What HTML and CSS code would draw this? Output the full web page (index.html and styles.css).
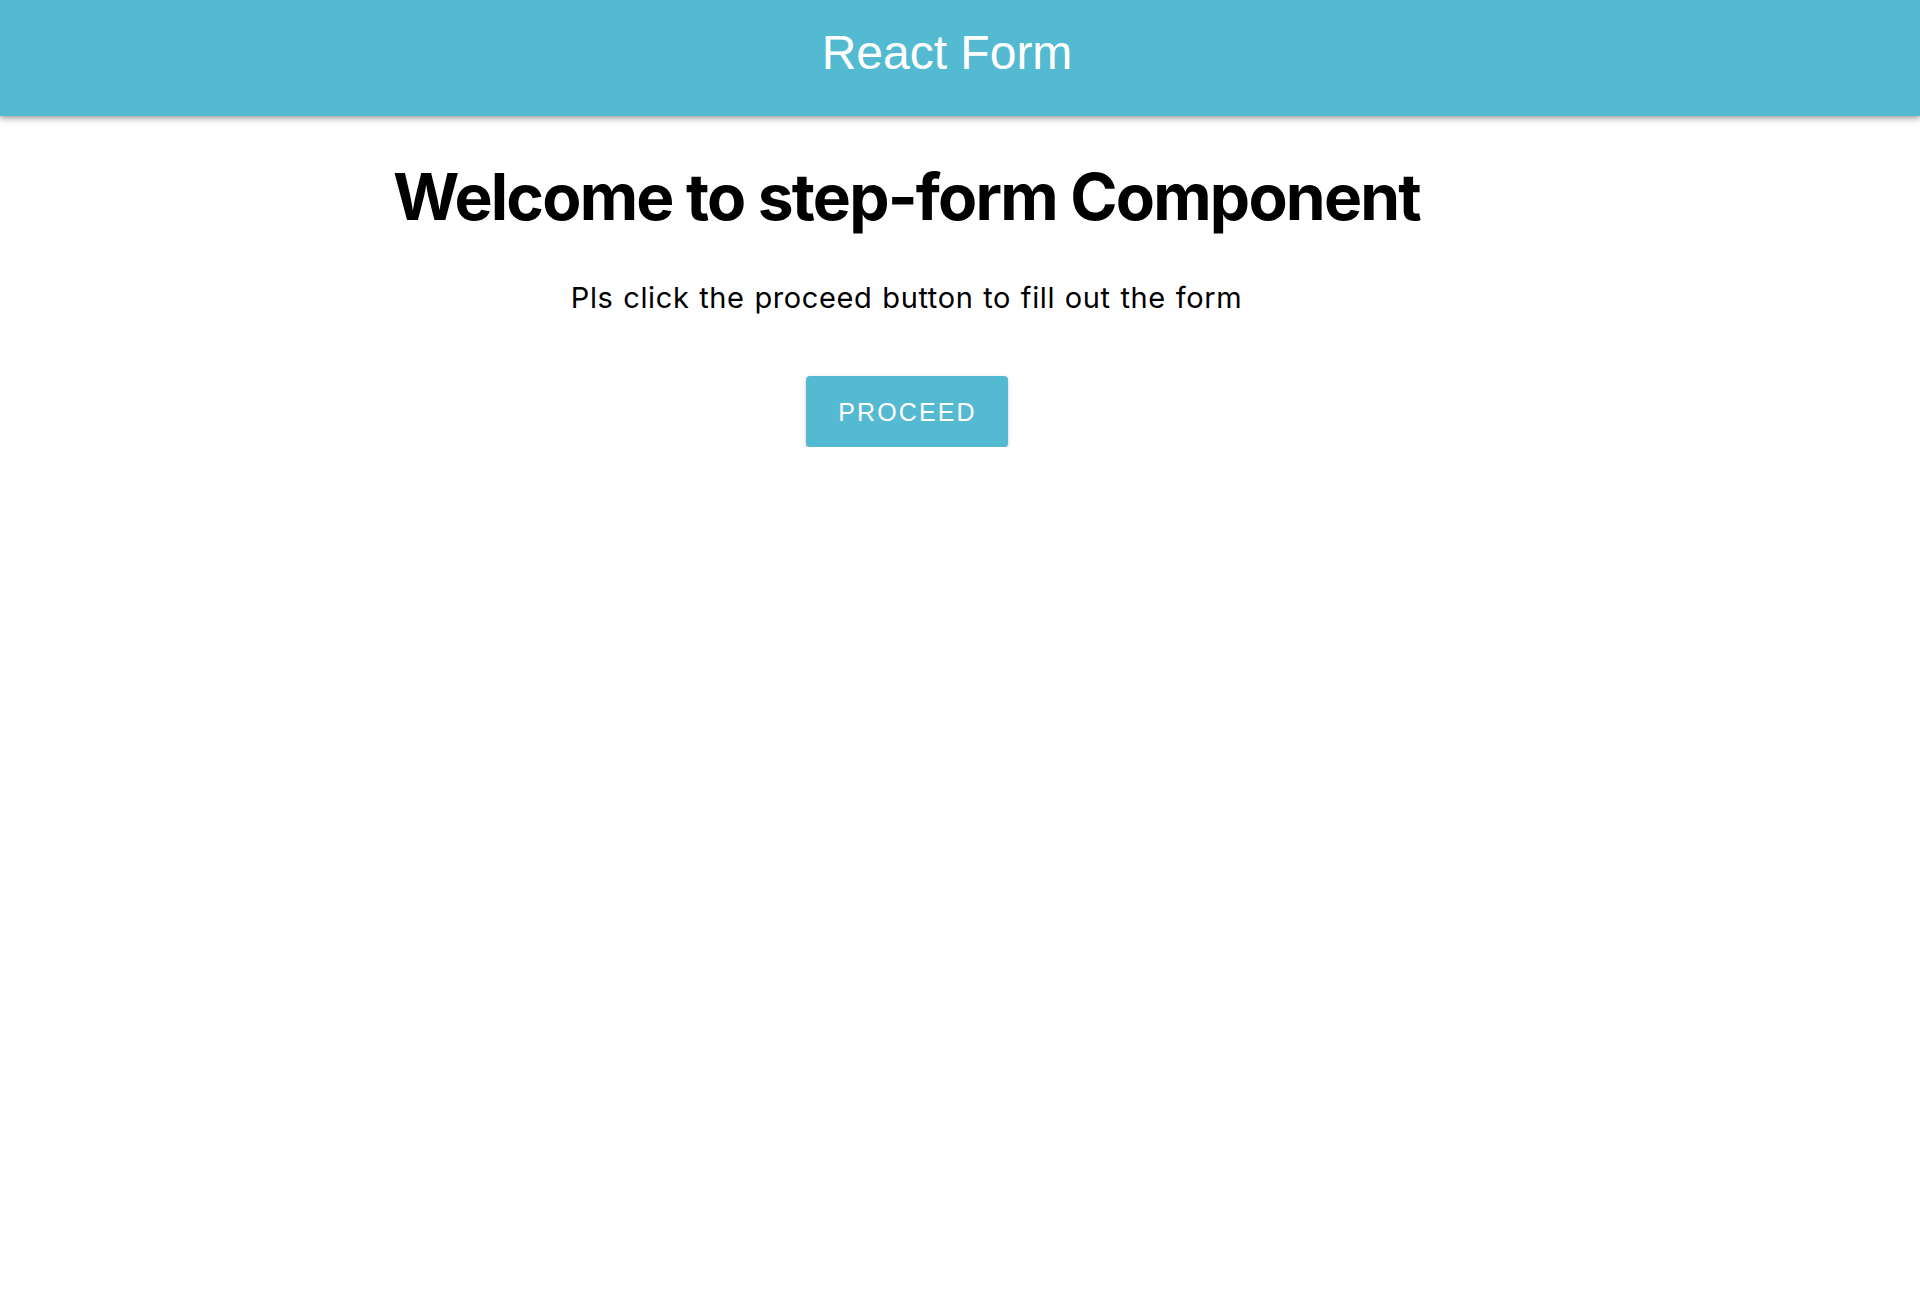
FILE: index.html
```html
<!DOCTYPE html>
<html lang="en">
<head>
<meta charset="utf-8">
<title>React Form</title>
<link rel="stylesheet" href="styles.css">
</head>
<body>
<header class="appbar">
  <div class="toolbar">
    <h2 class="appbar-title">React Form</h2>
  </div>
</header>
<main class="content">
  <h1 class="welcome">Welcome to step-form Component</h1>
  <p class="lead">Pls click the proceed button to fill out the form</p>
  <button class="proceed" type="button">PROCEED</button>
</main>
</body>
</html>
```
FILE: styles.css
```css
html, body {
  margin: 0;
  padding: 0;
  background: #ffffff;
}
body {
  font-family: Inter, "Noto Sans", sans-serif;
  color: #000000;
}
.appbar {
  background: #54bad2;
  height: 116px;
  box-shadow: 0 2px 4px -1px rgba(0,0,0,0.2), 0 4px 5px 0 rgba(0,0,0,0.14), 0 1px 10px 0 rgba(0,0,0,0.12);
  display: flex;
  align-items: center;
  justify-content: center;
  padding-right: 26px;
  position: relative;
  z-index: 1;
}
.toolbar {
  display: flex;
  align-items: center;
  justify-content: center;
}
.appbar-title {
  margin: 0;
  font-family: "Liberation Sans", Arial, sans-serif;
  font-weight: 400;
  font-size: 48px;
  line-height: 1;
  color: #ffffff;
  transform: translateY(-5px);
}
.content {
  display: flex;
  flex-direction: column;
  align-items: center;
  padding-right: 107px;
  padding-top: 43px;
}
.welcome {
  margin: 0;
  font-size: 64px;
  font-weight: 700;
  line-height: 1.2;
  letter-spacing: -1.8px;
}
.lead {
  margin: 40px 0 0;
  font-size: 29px;
  font-weight: 400;
  line-height: 1.5;
  letter-spacing: 0.62px;
  word-spacing: 1px;
}
.proceed {
  margin-top: 57px;
  width: 202px;
  height: 71px;
  border: none;
  border-radius: 4px;
  background: #54bad2;
  color: #ffffff;
  font-family: "Liberation Sans", Arial, sans-serif;
  font-size: 25px;
  letter-spacing: 2.1px;
  padding: 2px 0 0 2px;
  box-shadow: 0 3px 1px -2px rgba(0,0,0,0.2), 0 2px 2px 0 rgba(0,0,0,0.14), 0 1px 5px 0 rgba(0,0,0,0.12);
  cursor: pointer;
}
```
